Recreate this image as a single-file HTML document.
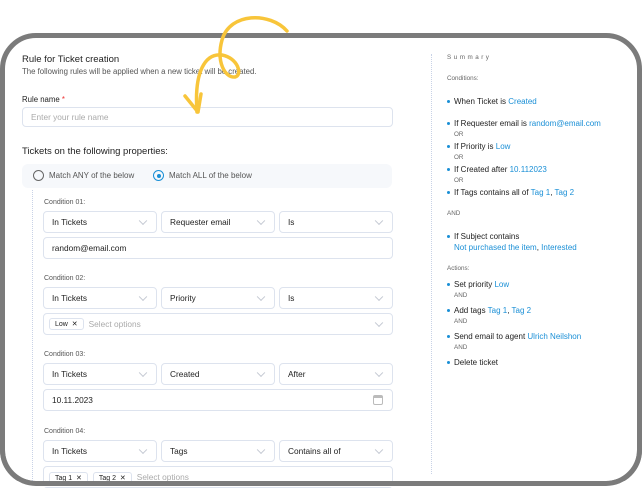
<!DOCTYPE html>
<html><head><style>
*{box-sizing:border-box;margin:0;padding:0}
body{width:644px;height:487px;background:#fff;font-family:"Liberation Sans",sans-serif;position:relative;overflow:hidden;color:#222}
.frame{position:absolute;left:0;top:33px;width:642px;height:453px;border:5px solid #7b7b7b;border-radius:36px;background:#fff}
.a{position:absolute;white-space:nowrap}
.box{position:absolute;border:1px solid #dde3ee;border-radius:4px;background:#fff;font-size:8.3px;color:#222;padding-left:8px;display:flex;align-items:center}
.chev{position:absolute;right:10px;top:50%;width:6px;height:6px;border-right:1px solid #c3c8d2;border-bottom:1px solid #c3c8d2;transform:translateY(-70%) rotate(45deg)}
.lbl{position:absolute;font-size:7px;color:#555}
.tag{border:1px solid #dde3ee;border-radius:3px;padding:1px 5px;font-size:7px;margin-right:5px}
.ph{color:#aaa}
.s{position:absolute;font-size:8px;color:#222;white-space:nowrap}
.s b{color:#1a8fd6;font-weight:normal}
.dot{display:inline-block;width:3px;height:3px;border-radius:50%;background:#1a8fd6;margin-right:4px;vertical-align:middle}
.sm{position:absolute;font-size:6.3px;color:#666}
</style></head><body>
<div class="frame"></div>
<div class="a" style="left:22px;top:54px;font-size:9.5px;color:#222">Rule for Ticket creation</div>
<div class="a" style="left:22px;top:67px;font-size:7.8px;color:#555">The following rules will be applied when a new ticket will be created.</div>
<div class="a" style="left:22px;top:95px;font-size:7.8px;color:#222">Rule name <span style="color:#e33">*</span></div>
<div class="box" style="left:22px;top:107px;width:371px;height:20px;color:#aaa">Enter your rule name</div>
<div class="a" style="left:22px;top:146px;font-size:9.5px;color:#222">Tickets on the following properties:</div>
<div class="a" style="left:22px;top:164px;width:370px;height:24px;background:#f6f8fb;border-radius:6px"></div>
<div class="a" style="left:33px;top:170px;width:11px;height:11px;border:1px solid #666;border-radius:50%"></div>
<div class="a" style="left:49px;top:171px;font-size:8px;color:#555">Match ANY of the below</div>
<div class="a" style="left:153px;top:170px;width:11px;height:11px;border:1px solid #1a8fd6;border-radius:50%"><div style="position:absolute;left:2.5px;top:2.5px;width:4px;height:4px;background:#1a8fd6;border-radius:50%"></div></div>
<div class="a" style="left:169px;top:171px;font-size:8px;color:#555">Match ALL of the below</div>
<div class="a" style="left:32px;top:190px;height:297px;border-left:1px dotted #c8d2e6"></div>

<div class="lbl" style="left:44px;top:199px">Condition 01:</div>
<div class="box" style="left:43px;top:211px;width:114px;height:22px">In Tickets<span class="chev"></span></div>
<div class="box" style="left:161px;top:211px;width:114px;height:22px">Requester email<span class="chev"></span></div>
<div class="box" style="left:279px;top:211px;width:114px;height:22px">Is<span class="chev"></span></div>
<div class="box" style="left:43px;top:237px;width:350px;height:22px">random@email.com</div>

<div class="lbl" style="left:44px;top:275px">Condition 02:</div>
<div class="box" style="left:43px;top:287px;width:114px;height:22px">In Tickets<span class="chev"></span></div>
<div class="box" style="left:161px;top:287px;width:114px;height:22px">Priority<span class="chev"></span></div>
<div class="box" style="left:279px;top:287px;width:114px;height:22px">Is<span class="chev"></span></div>
<div class="box" style="left:43px;top:313px;width:350px;height:22px;padding-left:5px"><span class="tag">Low &nbsp;✕</span><span class="ph">Select options</span><span class="chev"></span></div>

<div class="lbl" style="left:44px;top:351px">Condition 03:</div>
<div class="box" style="left:43px;top:363px;width:114px;height:22px">In Tickets<span class="chev"></span></div>
<div class="box" style="left:161px;top:363px;width:114px;height:22px">Created<span class="chev"></span></div>
<div class="box" style="left:279px;top:363px;width:114px;height:22px">After<span class="chev"></span></div>
<div class="box" style="left:43px;top:389px;width:350px;height:22px">10.11.2023<span style="position:absolute;right:9px;top:5px;width:10px;height:10px;border:1px solid #bbb;border-radius:2px;border-top-width:3px"></span></div>

<div class="lbl" style="left:44px;top:428px">Condition 04:</div>
<div class="box" style="left:43px;top:440px;width:114px;height:22px">In Tickets<span class="chev"></span></div>
<div class="box" style="left:161px;top:440px;width:114px;height:22px">Tags<span class="chev"></span></div>
<div class="box" style="left:279px;top:440px;width:114px;height:22px">Contains all of<span class="chev"></span></div>
<div class="box" style="left:43px;top:466px;width:350px;height:22px;padding-left:5px;align-items:flex-start;padding-top:5px"><span class="tag">Tag 1 &nbsp;✕</span><span class="tag">Tag 2 &nbsp;✕</span><span class="ph">Select options</span></div>
<div class="a" style="left:0;top:481px;width:644px;height:6px;background:#fff"></div>
<div class="a" style="left:0;top:437px;width:642px;height:49px;border:5px solid #7b7b7b;border-top:none;border-radius:0 0 36px 36px"></div>

<div class="a" style="left:431px;top:54px;height:420px;border-left:1px dotted #c8d2e6"></div>
<div class="sm" style="left:447px;top:54px;letter-spacing:2.5px">Summary</div>
<div class="sm" style="left:447px;top:75px">Conditions:</div>
<div class="s" style="left:447px;top:97px"><span class="dot"></span>When Ticket is <b>Created</b></div>
<div class="s" style="left:447px;top:119px"><span class="dot"></span>If Requester email is <b>random@email.com</b></div>
<div class="sm" style="left:454px;top:131px">OR</div>
<div class="s" style="left:447px;top:142px"><span class="dot"></span>If Priority is <b>Low</b></div>
<div class="sm" style="left:454px;top:154px">OR</div>
<div class="s" style="left:447px;top:165px"><span class="dot"></span>If Created after <b>10.112023</b></div>
<div class="sm" style="left:454px;top:177px">OR</div>
<div class="s" style="left:447px;top:188px"><span class="dot"></span>If Tags contains all of <b>Tag 1</b>, <b>Tag 2</b></div>
<div class="sm" style="left:447px;top:210px">AND</div>
<div class="s" style="left:447px;top:232px"><span class="dot"></span>If Subject contains</div>
<div class="s" style="left:454px;top:243px"><b>Not purchased the item</b>, <b>Interested</b></div>
<div class="sm" style="left:447px;top:265px">Actions:</div>
<div class="s" style="left:447px;top:280px"><span class="dot"></span>Set priority <b>Low</b></div>
<div class="sm" style="left:454px;top:292px">AND</div>
<div class="s" style="left:447px;top:306px"><span class="dot"></span>Add tags <b>Tag 1</b>, <b>Tag 2</b></div>
<div class="sm" style="left:454px;top:318px">AND</div>
<div class="s" style="left:447px;top:332px"><span class="dot"></span>Send email to agent <b>Ulrich Neilshon</b></div>
<div class="sm" style="left:454px;top:344px">AND</div>
<div class="s" style="left:447px;top:358px"><span class="dot"></span>Delete ticket</div>

<svg style="position:absolute;left:0;top:0" width="644" height="487">
<path d="M287,31 C270,12 230,12 222,40 C216,62 225,78 235,77 C243,75 238,58 222,55 C205,53 194,72 197,112" fill="none" stroke="#f8c53a" stroke-width="3.5" stroke-linecap="round"/>
<path d="M185,96 L198,112 M201,94 L198,112" fill="none" stroke="#f8c53a" stroke-width="3.5" stroke-linecap="round"/>
</svg>
</body></html>
